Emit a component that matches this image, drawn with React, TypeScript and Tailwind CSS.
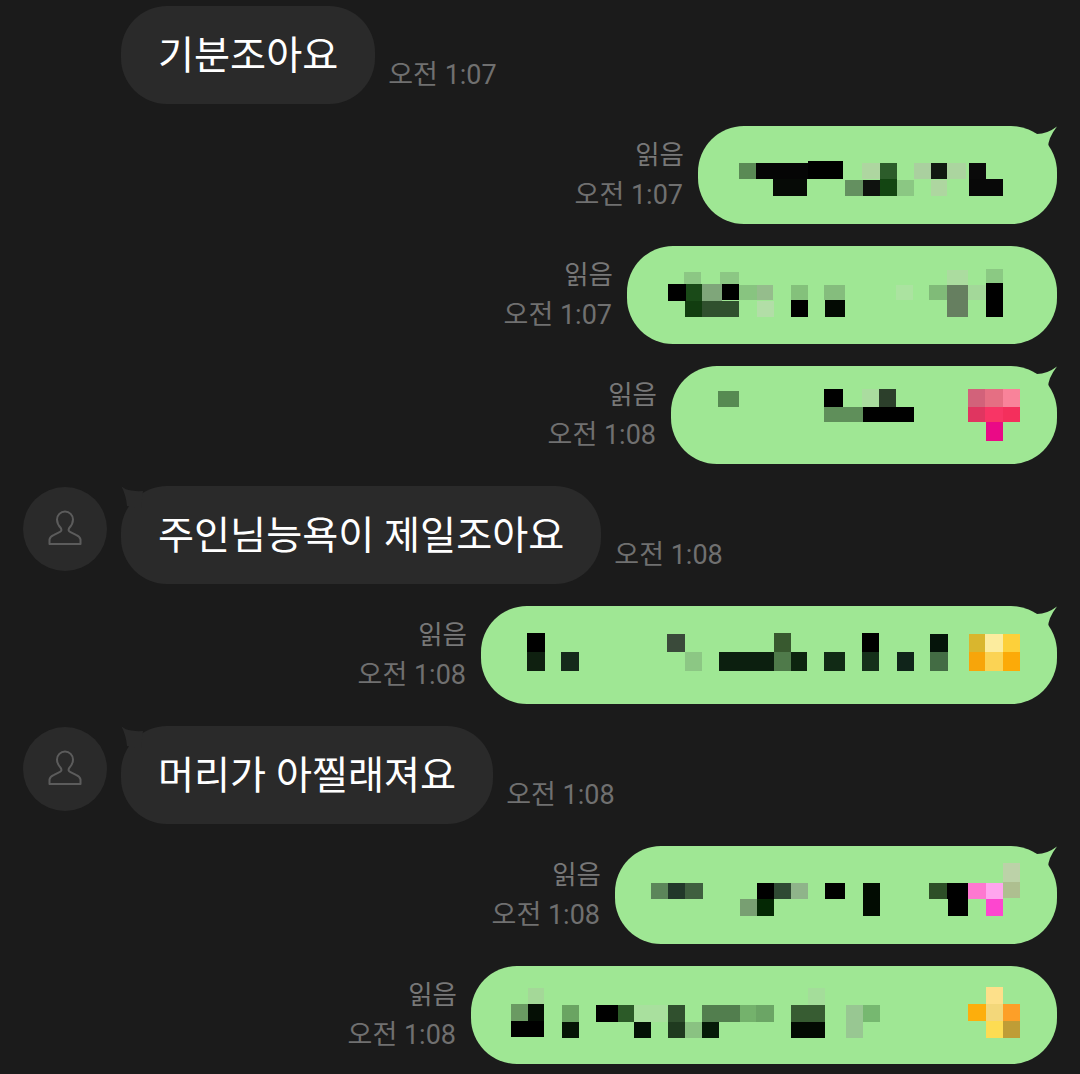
type Block = [number, number, number, number, string]

const FONT = "font-['Roboto','Noto_Sans_CJK_KR',sans-serif]"

function Avatar() {
  return (
    <div className="w-[84px] h-[84px] rounded-full bg-[#2a2a2a] shrink-0 mt-px">
      <svg width="84" height="84" viewBox="0 0 84 84" fill="none">
        <path
          d="M26.5 57 V52.5 Q27 49.5 31 47.8 L36.5 45.2 Q39.5 43.8 37.8 41 Q34 37 34 32.5 A8 8 0 0 1 50 32.5 Q50 37 46.2 41 Q44.5 43.8 47.5 45.2 L53 47.8 Q57 49.5 57.5 52.5 V57 Z"
          stroke="#5c5c5c"
          strokeWidth="2"
          strokeLinejoin="round"
        />
      </svg>
    </div>
  )
}

function Incoming({ text, time, avatar }: { text: string; time: string; avatar?: boolean }) {
  return (
    <div className="h-[98px] flex pl-[23px]">
      <div className="w-[98px] shrink-0">{avatar && <Avatar />}</div>
      <div className="relative h-[98px] rounded-[46px] bg-[#2a2a2a] px-[37px] flex items-center pt-1 text-[39.2px] leading-none text-white">
        {avatar && (
          <svg className="absolute left-0 top-0" width="30" height="24" viewBox="0 0 30 24">
            <path d="M0.5 0.5 Q7 6 22 5 L20 22 L6 20 Q5 9 0.5 0.5 Z" fill="#2a2a2a" />
          </svg>
        )}
        {text}
      </div>
      <div className="self-end ml-[13px] mb-[9px] text-[27px] leading-10 text-[#707070]">{time}</div>
    </div>
  )
}

function Outgoing({
  left,
  top,
  time,
  tail,
  blocks,
}: {
  left: number
  top: number
  time: string
  tail?: boolean
  blocks: Block[]
}) {
  const w = 1057 - left
  return (
    <div className="h-[98px] flex justify-end pr-[23px]">
      <div className="self-end mr-[15px] mb-[9px] text-right text-[27px] leading-10 text-[#707070]">
        <div className="text-[26.5px] text-[#787878] -mr-px">읽음</div>
        <div>{time}</div>
      </div>
      <div className="relative h-[98px] rounded-[46px] bg-[#9fe794] shrink-0" style={{ width: w }}>
        {tail && (
          <svg className="absolute right-0 top-0" width="34" height="26" viewBox="0 0 34 26">
            <path d="M34 0.5 Q24 8 14 8 L2 5 L25 22 Q25 12 34 0.5 Z" fill="#9fe794" />
          </svg>
        )}
        <svg className="relative block" width={w} height="98" viewBox={`${left} ${top} ${w} 98`}>
          {blocks.map(([x, y, bw, bh, c], i) => (
            <rect key={i} x={x} y={y} width={bw} height={bh} fill={c} />
          ))}
        </svg>
      </div>
    </div>
  )
}

const B1: Block[] = [
  [739, 163, 17, 16, "#5a8a55"],
  [756, 163, 52, 16, "#050505"],
  [808, 161, 35, 18, "#000000"],
  [773, 179, 34, 17, "#060a06"],
  [862, 163, 18, 16, "#aed6a0"],
  [880, 163, 17, 16, "#2c5c2a"],
  [880, 179, 17, 17, "#134512"],
  [845, 180, 18, 16, "#649060"],
  [863, 180, 17, 16, "#0f120f"],
  [897, 180, 17, 16, "#8bc783"],
  [914, 163, 17, 16, "#aad09f"],
  [931, 163, 16, 16, "#111a11"],
  [931, 180, 16, 16, "#aed6a0"],
  [947, 163, 19, 16, "#abd59f"],
  [969, 163, 17, 16, "#0a0a0a"],
  [969, 179, 34, 17, "#080808"],
]

const B2: Block[] = [
  [668, 284, 18, 17, "#000000"],
  [684, 272, 17, 12, "#8cc784"],
  [720, 272, 19, 12, "#8cc784"],
  [686, 284, 16, 17, "#1a4a18"],
  [702, 284, 20, 17, "#7fa67a"],
  [722, 284, 17, 16, "#000000"],
  [739, 285, 18, 15, "#88c480"],
  [757, 285, 16, 15, "#95bd8c"],
  [685, 301, 17, 16, "#123d10"],
  [702, 301, 37, 16, "#30502e"],
  [757, 301, 17, 16, "#b2dea7"],
  [791, 285, 17, 15, "#84c17b"],
  [791, 300, 17, 17, "#000000"],
  [824, 285, 21, 15, "#85bd7d"],
  [825, 300, 20, 17, "#030a03"],
  [896, 285, 17, 15, "#abe3a0"],
  [929, 285, 18, 15, "#80bb78"],
  [947, 270, 21, 15, "#abdc9f"],
  [947, 285, 21, 32, "#667f60"],
  [968, 285, 18, 15, "#a3d899"],
  [986, 269, 17, 14, "#8bc983"],
  [986, 283, 17, 34, "#000000"],
]

const B3: Block[] = [
  [718, 391, 21, 16, "#568a52"],
  [824, 389, 19, 18, "#000000"],
  [862, 389, 17, 18, "#aadc9f"],
  [879, 389, 17, 18, "#2c3f2b"],
  [824, 407, 39, 15, "#5f8f5a"],
  [863, 407, 51, 15, "#000000"],
  [968, 389, 17, 18, "#d2627a"],
  [985, 389, 18, 18, "#e56f83"],
  [1003, 389, 17, 18, "#f9839a"],
  [968, 407, 17, 15, "#e03560"],
  [985, 407, 18, 15, "#f83565"],
  [1003, 407, 17, 15, "#f42f5c"],
  [986, 422, 17, 19, "#ea0a86"],
]

const B4: Block[] = [
  [527, 633, 18, 19, "#000000"],
  [527, 652, 18, 19, "#0f2010"],
  [561, 652, 18, 19, "#15291a"],
  [667, 634, 18, 18, "#3a4a3a"],
  [685, 652, 17, 19, "#8cc784"],
  [719, 652, 55, 19, "#0c1f0f"],
  [774, 633, 17, 19, "#38592f"],
  [774, 652, 17, 19, "#4f7a4a"],
  [791, 652, 16, 19, "#0d240f"],
  [824, 652, 21, 19, "#112a15"],
  [862, 633, 17, 19, "#000000"],
  [862, 652, 17, 19, "#15301a"],
  [897, 652, 17, 19, "#10241a"],
  [930, 634, 18, 18, "#05140a"],
  [930, 652, 18, 19, "#436c44"],
  [969, 634, 16, 18, "#d9b62e"],
  [985, 634, 18, 18, "#fcec9e"],
  [1003, 634, 17, 18, "#fdd03a"],
  [969, 652, 16, 19, "#f7a50a"],
  [985, 652, 18, 19, "#fbd354"],
  [1003, 652, 17, 19, "#fcaa08"],
]

const B5: Block[] = [
  [651, 883, 17, 16, "#5c865a"],
  [668, 883, 17, 16, "#22382a"],
  [685, 883, 18, 16, "#3f5f3f"],
  [757, 883, 17, 16, "#000000"],
  [774, 883, 17, 16, "#2f4a33"],
  [791, 883, 17, 16, "#8fb48a"],
  [740, 899, 17, 17, "#789f72"],
  [757, 899, 17, 17, "#042804"],
  [825, 883, 20, 16, "#000000"],
  [863, 883, 17, 33, "#020c02"],
  [929, 883, 18, 16, "#2d4f27"],
  [947, 883, 21, 16, "#000000"],
  [948, 899, 20, 17, "#000000"],
  [968, 883, 18, 16, "#fe78d0"],
  [986, 883, 17, 16, "#ffa5ee"],
  [986, 899, 17, 17, "#fd46cf"],
  [1003, 863, 17, 19, "#bcd2a8"],
  [1003, 882, 17, 16, "#aebf90"],
]

const B6: Block[] = [
  [528, 988, 16, 16, "#a4d898"],
  [511, 1004, 17, 17, "#6a9a62"],
  [528, 1004, 16, 17, "#050f05"],
  [511, 1021, 33, 16, "#000000"],
  [562, 1005, 17, 17, "#6aa462"],
  [562, 1022, 17, 16, "#051405"],
  [596, 1005, 22, 17, "#000000"],
  [618, 1005, 16, 17, "#2c5a28"],
  [634, 1005, 33, 17, "#a9e09e"],
  [634, 1022, 17, 16, "#031005"],
  [668, 1005, 17, 17, "#30502e"],
  [668, 1022, 17, 16, "#1f3a1f"],
  [685, 1022, 17, 16, "#8ac282"],
  [702, 1022, 17, 16, "#061a08"],
  [702, 1005, 38, 17, "#527e4e"],
  [740, 1005, 16, 17, "#74b26c"],
  [756, 1005, 18, 17, "#6ba565"],
  [791, 1005, 34, 17, "#375c32"],
  [791, 1022, 34, 16, "#030a03"],
  [808, 988, 17, 17, "#a4dd9a"],
  [846, 1005, 17, 33, "#98c792"],
  [863, 1005, 17, 17, "#76b870"],
  [986, 987, 17, 17, "#fde08a"],
  [968, 1004, 18, 17, "#fdae0c"],
  [986, 1004, 17, 17, "#f3d77a"],
  [1003, 1004, 17, 17, "#fd9f28"],
  [986, 1021, 17, 17, "#fddc52"],
  [1003, 1021, 17, 17, "#bf9d36"],
]

export default function App() {
  return (
    <div className={`w-[1080px] h-[1074px] overflow-hidden bg-[#1b1b1b] pt-1.5 flex flex-col gap-[22px] ${FONT}`}>
      <Incoming text="기분조아요" time="오전 1:07" />
      <Outgoing left={698} top={126} time="오전 1:07" tail blocks={B1} />
      <Outgoing left={627} top={246} time="오전 1:07" blocks={B2} />
      <Outgoing left={671} top={366} time="오전 1:08" tail blocks={B3} />
      <Incoming text="주인님능욕이 제일조아요" time="오전 1:08" avatar />
      <Outgoing left={481} top={606} time="오전 1:08" tail blocks={B4} />
      <Incoming text="머리가 아찔래져요" time="오전 1:08" avatar />
      <Outgoing left={615} top={846} time="오전 1:08" tail blocks={B5} />
      <Outgoing left={471} top={966} time="오전 1:08" blocks={B6} />
    </div>
  )
}
